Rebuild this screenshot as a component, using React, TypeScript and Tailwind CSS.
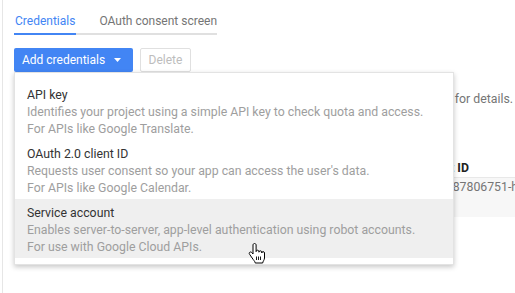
const menuItems = [
    {
        title: 'API key',
        lines: ['Identifies your project using a simple API key to check quota and access.', 'For APIs like Google Translate.'],
        active: false,
    },
    {
        title: 'OAuth 2.0 client ID',
        lines: ["Requests user consent so your app can access the user's data.", 'For APIs like Google Calendar.'],
        active: false,
    },
    {
        title: 'Service account',
        lines: ['Enables server-to-server, app-level authentication using robot accounts.', 'For use with Google Cloud APIs.'],
        active: true,
    },
];

function HandCursor() {
    return (
        <svg width="18" height="22" viewBox="0 0 18 22" className="absolute left-[248px] top-[242px]">
            <path
                d="M6.5 1.5c-.8 0-1.5.7-1.5 1.5v9l-1.2-1.4c-.6-.7-1.6-.8-2.2-.2-.5.5-.5 1.3 0 1.9l3.6 5.2c.9 1.3 2 2.3 2 3.5h7.5c0-1.5 1.8-3 1.8-5v-5c0-.8-.6-1.4-1.4-1.4-.8 0-1.4.6-1.4 1.4v-.8c0-.8-.6-1.4-1.4-1.4-.8 0-1.4.6-1.4 1.4v-.6c0-.8-.6-1.4-1.4-1.4-.8 0-1.4.6-1.4 1.4V3c0-.8-.7-1.5-1.5-1.5z"
                fill="#fff"
                stroke="#000"
                strokeWidth="1"
                strokeLinejoin="round"
            />
            <path d="M8.5 14.5v3.5M10.5 14.5v3.5M12.5 14.5v3.5" stroke="#000" strokeWidth="0.9" />
        </svg>
    );
}

export default function App() {
    return (
        <div className="relative w-[515px] h-[293px] bg-white overflow-hidden font-['Roboto',sans-serif]">
            <div className="h-full ml-[2px] border-l border-[#e6e6e6] pl-[11px] flex flex-col">
                {/* Tabs */}
                <div className="mt-[11px] inline-flex self-start border-b-2 border-[#e0e0e0] text-[12px] leading-[20px]">
                    <div className="px-[1px] pb-[2px] text-[#4285f4] border-b-2 border-[#4285f4] -mb-[2px]">Credentials</div>
                    <div className="ml-[23px] pb-[2px] text-[#757575]">OAuth consent screen</div>
                </div>

                {/* Actions */}
                <div className="mt-[13px] flex gap-[7px] text-[12px]">
                    <button className="h-[24px] w-[119px] rounded-[2px] bg-[#4285f4] text-white flex items-center pl-[8px]">
                        Add credentials
                        <svg width="7" height="4" viewBox="0 0 7 4" className="ml-[9px]">
                            <path d="M0 0h7L3.5 4z" fill="#fff" />
                        </svg>
                    </button>
                    <button className="h-[24px] w-[51px] rounded-[2px] border border-[#e0e0e0] text-[#bdbdbd]">Delete</button>
                </div>

                {/* Page content behind the menu */}
                <div className="mt-[19px] flex justify-end pr-[2px] text-[12.3px] leading-[17px] text-[#757575] whitespace-nowrap">
                    <span>Create credentials to access your enabled APIs. See the documentation for details.</span>
                </div>

                <div className="mt-[52px] ml-[-13px] pl-[421px] text-[12.3px] whitespace-nowrap">
                    <div className="h-[17px] leading-[17px] font-bold text-[#212121]">Client ID</div>
                    <div className="h-[40px] border-t border-[#e8e8e8] bg-[#f7f7f7] leading-[19px] text-[#757575] pl-[3px]">104487806751-hk2q</div>
                </div>
            </div>

            {/* Dropdown menu */}
            <div className="absolute left-[14px] top-[72px] w-[440px] bg-white border border-[#e3e3e3] shadow-[0_2px_5px_rgba(0,0,0,0.22)] pt-[8px] pb-[6px]">
                {menuItems.map((item) => (
                    <div
                        key={item.title}
                        className={`px-[12px] pt-[6px] pb-[2px] text-[12.3px] leading-[17px] ${item.active ? 'bg-[#efefef]' : ''}`}
                    >
                        <div className="text-[#333333]">{item.title}</div>
                        {item.lines.map((line) => (
                            <div key={line} className="text-[#9e9e9e]">
                                {line}
                            </div>
                        ))}
                    </div>
                ))}
            </div>

            <HandCursor />
        </div>
    );
}
